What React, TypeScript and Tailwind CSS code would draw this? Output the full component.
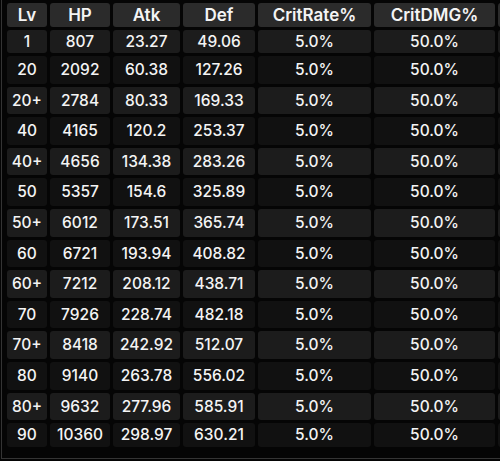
import React from 'react';

interface StatRow {
  lv: string;
  hp: string;
  atk: string;
  def: string;
}

const rows: StatRow[] = [
  { lv: '1', hp: '807', atk: '23.27', def: '49.06' },
  { lv: '20', hp: '2092', atk: '60.38', def: '127.26' },
  { lv: '20+', hp: '2784', atk: '80.33', def: '169.33' },
  { lv: '40', hp: '4165', atk: '120.2', def: '253.37' },
  { lv: '40+', hp: '4656', atk: '134.38', def: '283.26' },
  { lv: '50', hp: '5357', atk: '154.6', def: '325.89' },
  { lv: '50+', hp: '6012', atk: '173.51', def: '365.74' },
  { lv: '60', hp: '6721', atk: '193.94', def: '408.82' },
  { lv: '60+', hp: '7212', atk: '208.12', def: '438.71' },
  { lv: '70', hp: '7926', atk: '228.74', def: '482.18' },
  { lv: '70+', hp: '8418', atk: '242.92', def: '512.07' },
  { lv: '80', hp: '9140', atk: '263.78', def: '556.02' },
  { lv: '80+', hp: '9632', atk: '277.96', def: '585.91' },
  { lv: '90', hp: '10360', atk: '298.97', def: '630.21' },
];

const headers = ['Lv', 'HP', 'Atk', 'Def', 'CritRate%', 'CritDMG%', ''];

const App: React.FC = () => {
  return (
    <div
      className="w-[500px] h-[461px] overflow-hidden bg-[#050505]"
      style={{ fontFamily: 'Inter, "Noto Sans", sans-serif' }}
    >
      <div className="ml-px h-[459px] overflow-hidden border-l border-b border-[#343434] pl-[2px]">
        <table className="table-fixed w-[600px] border-separate border-spacing-[3px] text-[#f4f4f4] text-center">
          <colgroup>
            <col className="w-[40px]" />
            <col className="w-[60px]" />
            <col className="w-[67px]" />
            <col className="w-[72px]" />
            <col className="w-[113px]" />
            <col className="w-[121px]" />
            <col className="w-[106px]" />
          </colgroup>
          <thead>
            <tr>
              {headers.map((h, i) => (
                <th
                  key={i}
                  className="h-[24px] p-0 bg-[#2b2b2b] rounded-[3px] text-[17px] font-semibold leading-none whitespace-nowrap"
                >
                  {h}
                </th>
              ))}
            </tr>
          </thead>
          <tbody>
            {rows.map((row, idx) => {
              const bg = idx % 2 === 0 ? 'bg-[#1c1c1c]' : 'bg-[#111111]';
              const h = idx === 0 ? 'h-[23px]' : idx === rows.length - 1 ? 'h-[24px]' : 'h-[27.6px]';
              const cells = [row.lv, row.hp, row.atk, row.def, '5.0%', '50.0%', ''];
              return (
                <tr key={row.lv}>
                  {cells.map((c, i) => (
                    <td
                      key={i}
                      className={`${h} ${bg} p-0 rounded-[3px] text-[15.5px] font-medium leading-none whitespace-nowrap`}
                    >
                      {c}
                    </td>
                  ))}
                </tr>
              );
            })}
          </tbody>
        </table>
      </div>
    </div>
  );
};

export default App;
